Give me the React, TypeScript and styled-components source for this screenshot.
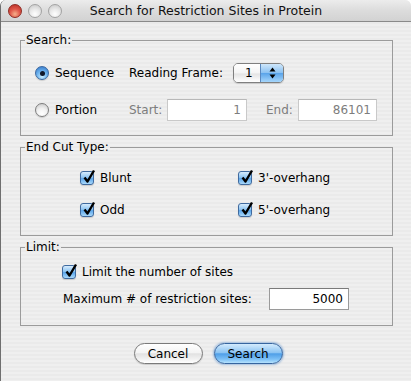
import styled, { createGlobalStyle } from "styled-components"

const GlobalStyle = createGlobalStyle`
  html, body {
    margin: 0;
    padding: 0;
    background: #ffffff;
  }
  body {
    font-family: "DejaVu Sans", "Liberation Sans", sans-serif;
    font-size: 12px;
    color: #000;
  }
`

const Window = styled.div`
  width: 411px;
  height: 381px;
  box-sizing: border-box;
  border-left: 1px solid #6f6f6f;
  border-radius: 6px 6px 0 0;
  overflow: hidden;
  background: repeating-linear-gradient(
    to bottom,
    #efefef 0px,
    #efefef 2px,
    #eaeaea 2px,
    #eaeaea 4px
  );
`

const TitleBar = styled.div`
  height: 21px;
  border-bottom: 1px solid #8a8a8a;
  background: linear-gradient(to bottom, #ececec 0%, #dcdcdc 50%, #d2d2d2 100%);
  display: grid;
  grid-template-columns: 1fr auto 1fr;
  align-items: center;
`

const Lights = styled.div`
  display: flex;
  gap: 6px;
  padding-left: 7px;
`

const Light = styled.span<{ $red?: boolean }>`
  width: 14px;
  height: 14px;
  border-radius: 50%;
  box-sizing: border-box;
  border: 1px solid ${(p) => (p.$red ? "#8e2a22" : "#a3a3a3")};
  background: ${(p) =>
    p.$red
      ? "radial-gradient(circle at 50% 75%, #f6b08a 0%, #e0584a 45%, #b52a22 100%)"
      : "radial-gradient(circle at 50% 75%, #ffffff 0%, #e9e9e9 45%, #c4c4c4 100%)"};
`

const Title = styled.div`
  font-size: 12.5px;
  color: #111;
  white-space: nowrap;
`

const Content = styled.div`
  padding: 11px 18px 0 19px;
`

const Group = styled.fieldset<{ $gap?: number }>`
  margin: ${(p) => (p.$gap ? `${p.$gap}px 0 0 0` : "0")};
  padding: 0;
  min-width: 0;
  border: 1px solid #9b9b9b;
`

const Legend = styled.legend`
  margin-left: 4px;
  padding: 0 1px;
  line-height: 14px;
  font-size: 12px;
`

const GroupBody = styled.div<{ $pad: string; $gap: number }>`
  padding: ${(p) => p.$pad};
  display: flex;
  flex-direction: column;
  gap: ${(p) => p.$gap}px;
`

const Row = styled.div<{ $h: number }>`
  height: ${(p) => p.$h}px;
  display: flex;
  align-items: center;
`

const Option = styled.label<{ $w?: number }>`
  display: flex;
  align-items: center;
  gap: 6px;
  width: ${(p) => (p.$w ? `${p.$w}px` : "auto")};
  white-space: nowrap;
`

const Radio = styled.span<{ $on?: boolean }>`
  width: 14px;
  height: 14px;
  border-radius: 50%;
  box-sizing: border-box;
  display: flex;
  align-items: center;
  justify-content: center;
  border: 1px solid ${(p) => (p.$on ? "#3a679f" : "#7d7d7d")};
  background: ${(p) =>
    p.$on
      ? "radial-gradient(circle at 50% 80%, #c8ecff 0%, #6fb4ee 45%, #2f74c8 100%)"
      : "radial-gradient(circle at 50% 80%, #ffffff 0%, #f1f1f1 45%, #c4c4c4 100%)"};
  box-shadow: 0 1px 1px rgba(0, 0, 0, 0.15);

  &::after {
    content: "";
    display: ${(p) => (p.$on ? "block" : "none")};
    width: 5px;
    height: 5px;
    border-radius: 50%;
    background: #10182a;
  }
`

const Label = styled.span<{ $w?: number; $dim?: boolean; $indent?: number }>`
  width: ${(p) => (p.$w ? `${p.$w}px` : "auto")};
  margin-left: ${(p) => p.$indent ?? 0}px;
  color: ${(p) => (p.$dim ? "#7d7d7d" : "#000")};
  white-space: nowrap;
`

const Field = styled.div<{ $w: number; $dim?: boolean }>`
  width: ${(p) => p.$w}px;
  height: 22px;
  box-sizing: border-box;
  border: 1px solid ${(p) => (p.$dim ? "#c9c9c9" : "#9a9a9a")};
  border-top-color: ${(p) => (p.$dim ? "#b8b8b8" : "#7a7a7a")};
  background: #ffffff;
  color: ${(p) => (p.$dim ? "#7d7d7d" : "#000")};
  display: flex;
  align-items: center;
  justify-content: flex-end;
  padding-right: 5px;
`

const Popup = styled.div`
  width: 51px;
  height: 20px;
  box-sizing: border-box;
  border: 1px solid #7f7f7f;
  border-radius: 5px;
  overflow: hidden;
  display: flex;
  box-shadow: 0 1px 1px rgba(0, 0, 0, 0.15);
`

const PopupValue = styled.div`
  flex: 1;
  padding-left: 11px;
  display: flex;
  align-items: center;
  background: linear-gradient(to bottom, #ffffff 0%, #f4f4f4 50%, #e4e4e4 55%, #ffffff 100%);
`

const PopupArrows = styled.div`
  width: 22px;
  display: flex;
  align-items: center;
  justify-content: center;
  border-left: 1px solid #5a88bf;
  background: linear-gradient(to bottom, #cfe7fb 0%, #8cc2f2 48%, #5aa4ea 52%, #a6d6fb 100%);
`

const Checks = styled.div`
  display: grid;
  grid-template-columns: 158px 1fr;
  row-gap: 14px;
  padding: 15px 0 16px 59px;
`

const CheckItem = styled.label`
  height: 18px;
  display: flex;
  align-items: center;
  gap: 6px;
  white-space: nowrap;
`

const Box = styled.span`
  position: relative;
  width: 14px;
  height: 14px;
  box-sizing: border-box;
  border-radius: 3px;
  border: 1px solid #3f6a9f;
  background: linear-gradient(to bottom, #d7ecfd 0%, #8fc5f2 45%, #5ca6ea 55%, #a9d9fb 100%);
  box-shadow: 0 1px 1px rgba(0, 0, 0, 0.15);

  svg {
    position: absolute;
    left: 1px;
    top: -3px;
  }
`

const Buttons = styled.div`
  margin-top: 17px;
  display: flex;
  justify-content: center;
  gap: 11px;
  padding-left: 3px;
`

const Button = styled.button<{ $primary?: boolean }>`
  width: 69px;
  height: 21px;
  padding: 0;
  border-radius: 11px;
  font-family: inherit;
  font-size: 12px;
  color: #000;
  border: 1px solid ${(p) => (p.$primary ? "#36659f" : "#7a7a7a")};
  background: ${(p) =>
    p.$primary
      ? "linear-gradient(to bottom, #d3ebfd 0%, #8cc4f3 45%, #4f9fe8 52%, #7cc0f6 80%, #b6e2fd 100%)"
      : "linear-gradient(to bottom, #ffffff 0%, #f4f4f4 45%, #e2e2e2 52%, #f2f2f2 80%, #ffffff 100%)"};
  box-shadow: ${(p) =>
    p.$primary ? "0 0 2px 1px rgba(70, 130, 200, 0.45)" : "0 1px 1px rgba(0, 0, 0, 0.15)"};
`

function Check({ label }: { label: string }) {
  return (
    <CheckItem>
      <Box>
        <svg width="14" height="15" viewBox="0 0 14 15">
          <path d="M2.5 8.5 L5.5 12.5 L12 1.5" fill="none" stroke="#000" strokeWidth="2.4" strokeLinejoin="round" />
        </svg>
      </Box>
      {label}
    </CheckItem>
  )
}

export default function App() {
  return (
    <>
      <GlobalStyle />
      <Window>
        <TitleBar>
          <Lights>
            <Light $red />
            <Light />
            <Light />
          </Lights>
          <Title>Search for Restriction Sites in Protein</Title>
          <div />
        </TitleBar>

        <Content>
          <Group>
            <Legend>Search:</Legend>
            <GroupBody $pad="15px 0 14px 14px" $gap={15}>
              <Row $h={22}>
                <Option $w={94}>
                  <Radio $on />
                  Sequence
                </Option>
                <Label $w={104}>Reading Frame:</Label>
                <Popup>
                  <PopupValue>1</PopupValue>
                  <PopupArrows>
                    <svg width="7" height="12" viewBox="0 0 7 12">
                      <path d="M3.5 0.5 L6.5 4.5 L0.5 4.5 Z" fill="#000" />
                      <path d="M3.5 11.5 L6.5 7.5 L0.5 7.5 Z" fill="#000" />
                    </svg>
                  </PopupArrows>
                </Popup>
              </Row>
              <Row $h={22}>
                <Option $w={94}>
                  <Radio />
                  Portion
                </Option>
                <Label $w={38} $dim>Start:</Label>
                <Field $w={80} $dim>1</Field>
                <Label $w={32} $dim $indent={19}>End:</Label>
                <Field $w={79} $dim>86101</Field>
              </Row>
            </GroupBody>
          </Group>

          <Group $gap={4}>
            <Legend>End Cut Type:</Legend>
            <Checks>
              <Check label="Blunt" />
              <Check label="3'-overhang" />
              <Check label="Odd" />
              <Check label="5'-overhang" />
            </Checks>
          </Group>

          <Group $gap={4}>
            <Legend>Limit:</Legend>
            <GroupBody $pad="9px 0 15px 41px" $gap={7}>
              <Row $h={18}>
                <Check label="Limit the number of sites" />
              </Row>
              <Row $h={22}>
                <Label $w={206} $indent={1}>Maximum # of restriction sites:</Label>
                <Field $w={80}>5000</Field>
              </Row>
            </GroupBody>
          </Group>

          <Buttons>
            <Button>Cancel</Button>
            <Button $primary>Search</Button>
          </Buttons>
        </Content>
      </Window>
    </>
  )
}
